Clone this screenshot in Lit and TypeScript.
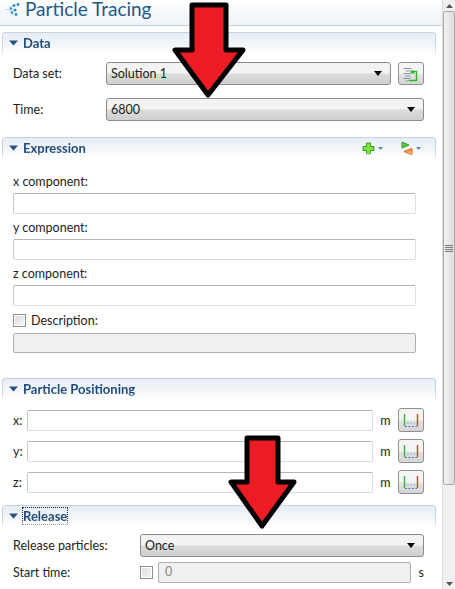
import { LitElement, html, css, svg } from "lit";
import { customElement } from "lit/decorators.js";

const caret = html`<svg class="tw" width="9" height="6" viewBox="0 0 9 6"><path d="M0 0.5H9L4.5 5.5Z" fill="#27527e"/></svg>`;

const arrow = (cls: string, w: number, h: number, pts: string) => html`<svg class="arrow ${cls}" width=${w} height=${h} viewBox="0 0 ${w} ${h}">
  ${svg`<polygon points=${pts} fill="#ed1c24" stroke="#000" stroke-width="5" stroke-linejoin="round"/>`}
</svg>`;

const pickIcon = html`<svg width="20" height="18" viewBox="0 0 20 18">
  <path d="M2.5 3.5H10.5M4.5 6H10.5M2.5 8.5H9.5M4.5 11H9.5M2.5 13.5H9.5M4.5 16H7" stroke="#8a97a3" fill="none"/>
  <path d="M11.5 8V6.5H15.5V15.5H7.5" stroke="#2cb52c" stroke-width="1.4" fill="none"/>
  <path d="M9 8.5L11.5 4.5L14 8.5Z" fill="#2cb52c"/>
</svg>`;

const rangeIcon = html`<svg width="18" height="18" viewBox="0 0 18 18">
  <path d="M2.5 3V15" stroke="#3cb043" stroke-width="1.4"/>
  <path d="M15.5 3V15" stroke="#c8452c" stroke-width="1.4"/>
  <path d="M5 12H13" stroke="#8aa6dc" stroke-dasharray="2 1.5"/>
  <path d="M3 15.5H15" stroke="#3f74d8" stroke-dasharray="2 1.5"/>
</svg>`;

const titleIcon = html`<svg width="15" height="13" viewBox="0 0 15 13">
  <path d="M0 6.5H5M4 4L9 2.5M4 8L9 7M5 10.5L9 11.5" stroke="#bfe0f2" stroke-width="1" fill="none"/>
  <g fill="#2f8fc6">
    <circle cx="9" cy="2.5" r="1.5"/><circle cx="13" cy="1.5" r="1.4"/><circle cx="6" cy="5.5" r="1.3"/>
    <circle cx="10" cy="7" r="1.5"/><circle cx="7" cy="9.5" r="1.2"/><circle cx="11" cy="11.5" r="1.4"/>
  </g>
</svg>`;

@customElement("app-root")
export class AppRoot extends LitElement {
  static styles = css`
    :host { display: block; width: 455px; height: 589px; overflow: hidden; position: relative; background: #fff; font-family: Lato, "Open Sans", sans-serif; font-size: 12.5px; color: #222; }
    .frame { display: flex; height: 589px; }
    .main { width: 442px; flex: none; overflow: hidden; }
    .title { height: 26px; box-sizing: border-box; padding: 0 0 7px 5px; display: flex; align-items: center; gap: 5px; background: linear-gradient(#fff, #eef3f8); border-bottom: 1px solid #c6d2dd; font-size: 19px; line-height: 18px; color: #1f5a86; }
    .sec { margin: 6px 6px 0 2px; }
    .head { height: 24px; box-sizing: border-box; display: flex; align-items: center; padding: 0 14px 3px 6px; gap: 5px; border: 1px solid #c5d3e0; border-bottom: 0; border-radius: 3px 3px 0 0; background: linear-gradient(#e6edf5, #fff); font-weight: 700; font-size: 13px; color: #1f4a78; -webkit-mask-image: linear-gradient(#000 60%, transparent); }
    .head .sp { flex: 1; }
    .focus { outline: 1px dotted #222; }
    .body { padding: 6px 12px 0 11px; display: flex; flex-direction: column; }
    .row { display: flex; align-items: center; }
    .lab { width: 93px; flex: none; }
    .lab.wide { width: 127px; }
    .sel { height: 23px; box-sizing: border-box; flex: 1; border: 1px solid #8c8c8c; border-radius: 3px; background: linear-gradient(#f3f3f3 0 48%, #dcdcdc 52%, #cfcfcf); display: flex; align-items: center; justify-content: space-between; padding: 0 8px 0 4px; }
    .car { width: 0; height: 0; border: 4px solid transparent; border-top: 5px solid #000; border-bottom: 0; }
    .btn { width: 26px; height: 24px; flex: none; box-sizing: border-box; border: 1px solid #8f8f8f; border-radius: 3px; background: linear-gradient(#f4f4f4 0 50%, #e2e2e2 55%, #d6d6d6); display: flex; align-items: center; justify-content: center; }
    .inp { height: 21px; box-sizing: border-box; border: 1px solid #d9dee2; border-top-color: #b5b5b5; border-left-color: #c8c8c8; border-radius: 2px; background: #fff; }
    .dis { background: #f0f0f0; border: 1px solid #aeb0b0; }
    .cap { margin-top: 8px; height: 17px; line-height: 11px; }
    .cap.first { margin-top: 0; }
    .grow { flex: 1; }
    .cb { width: 11px; height: 11px; flex: none; border: 1px solid #8e8f8f; background: linear-gradient(135deg, #dcdcdc, #f6f6f6); box-shadow: inset 0 0 0 1px #fff; }
    .arrow { position: absolute; }
    .a1 { left: 170px; top: 0; }
    .a2 { left: 226px; top: 433px; }
    .bar { width: 13px; flex: none; background: #f0f0f0; border-left: 1px solid #dcdcdc; box-sizing: border-box; display: flex; flex-direction: column; align-items: center; }
    .up, .down { height: 11px; display: flex; align-items: center; justify-content: center; }
    .thumb { width: 12px; height: 474px; box-sizing: border-box; border: 1px solid #a9a9a9; border-radius: 2px; background: linear-gradient(90deg, #f2f2f2, #dcdcdc); display: flex; align-items: center; justify-content: center; }
    .track { flex: 1; }
    .tools { display: flex; gap: 18px; align-items: center; }
    .tool { display: flex; gap: 3px; align-items: center; }
    .unit { width: 25px; text-align: center; flex: none; }
    .desc { margin-top: 6px; gap: 5px; height: 17px; }
    .dis.tall { margin-top: 4px; height: 20px; }
    .sx { width: 14px; flex: none; }
    .gap7 { margin-top: 7px; }
    .start { margin-top: 5px; }
    .zero { margin-left: 5px; padding: 1px 6px; color: #8a8a8a; }
    .s { width: 13px; text-align: right; flex: none; }
    .pick { margin-left: 7px; height: 23px; }
    .t13 { margin-top: 13px; }
    .expr { padding-top: 15px; padding-right: 20px; }
    .normal { font-weight: 400; }
  `;

  render() {
    const minicar = html`<svg width="5" height="3" viewBox="0 0 5 3"><path d="M0 0H5L2.5 3Z" fill="#6b8aa6"/></svg>`;
    const xyz = (n: string, cls: string) => html`<div class="row ${cls}">
      <span class="sx">${n}:</span><div class="inp grow"></div><span class="unit">m</span>
      <div class="btn">${rangeIcon}</div></div>`;
    return html`
      <div class="frame">
        <div class="main">
          <div class="title">
            ${titleIcon}
            <span>Particle Tracing</span>
          </div>

          <div class="sec">
            <div class="head">${caret}<span>Data</span></div>
            <div class="body">
              <div class="row"><span class="lab">Data set:</span><div class="sel"><span>Solution 1</span><i class="car"></i></div><div class="btn pick">${pickIcon}</div></div>
              <div class="row t13"><span class="lab">Time:</span><div class="sel"><span>6800</span><i class="car"></i></div></div>
            </div>
          </div>

          <div class="sec" style="margin-top:16px">
            <div class="head">${caret}<span>Expression</span><span class="sp"></span>
              <span class="tools normal">
                <span class="tool"><svg width="13" height="13" viewBox="0 0 13 13"><path d="M4.5 1H8.5V4.5H12V8.5H8.5V12H4.5V8.5H1V4.5H4.5Z" fill="#7fe23a" stroke="#2e9e2e" stroke-linejoin="round"/></svg>${minicar}</span>
                <span class="tool"><svg width="12" height="15" viewBox="0 0 12 15"><path d="M1 1L8 4L1 7Z" fill="#5fd13a" stroke="#2e9e2e"/><path d="M11 7.5L3 10.5L11 14Z" fill="#f7a13c" stroke="#d9601c"/></svg>${minicar}</span>
              </span>
            </div>
            <div class="body expr">
              <div class="cap first">x component:</div><div class="inp"></div>
              <div class="cap">y component:</div><div class="inp"></div>
              <div class="cap">z component:</div><div class="inp"></div>
              <div class="row desc"><i class="cb"></i><span>Description:</span></div>
              <div class="inp dis tall"></div>
            </div>
          </div>

          <div class="sec" style="margin-top:25px">
            <div class="head">${caret}<span>Particle Positioning</span></div>
            <div class="body">
              ${xyz("x", "")}${xyz("y", "gap7")}${xyz("z", "gap7")}
            </div>
          </div>

          <div class="sec" style="margin-top:11px">
            <div class="head">${caret}<span class="focus">Release</span></div>
            <div class="body" style="padding-top:5px">
              <div class="row"><span class="lab wide">Release particles:</span><div class="sel"><span>Once</span><i class="car"></i></div></div>
              <div class="row start"><span class="lab wide">Start time:</span><i class="cb"></i><div class="inp dis grow zero">0</div><span class="s">s</span></div>
            </div>
          </div>
        </div>
        <div class="bar">
          <div class="up"><svg width="7" height="4" viewBox="0 0 7 4"><path d="M0 4H7L3.5 0Z" fill="#555"/></svg></div>
          <div class="thumb"><svg width="8" height="7" viewBox="0 0 8 7"><path d="M0 .5H8M0 2.5H8M0 4.5H8M0 6.5H8" stroke="#777"/></svg></div>
          <div class="track"></div>
          <div class="down"><svg width="7" height="4" viewBox="0 0 7 4"><path d="M0 0H7L3.5 4Z" fill="#555"/></svg></div>
        </div>
      </div>
      ${arrow("a1", 78, 100, "22,5 56,5 56,50 73,50 38,95 5,50 22,50")}
      ${arrow("a2", 74, 98, "21,5 52,5 52,49 68,49 36,93 5,49 21,49")}
    `;
  }
}
